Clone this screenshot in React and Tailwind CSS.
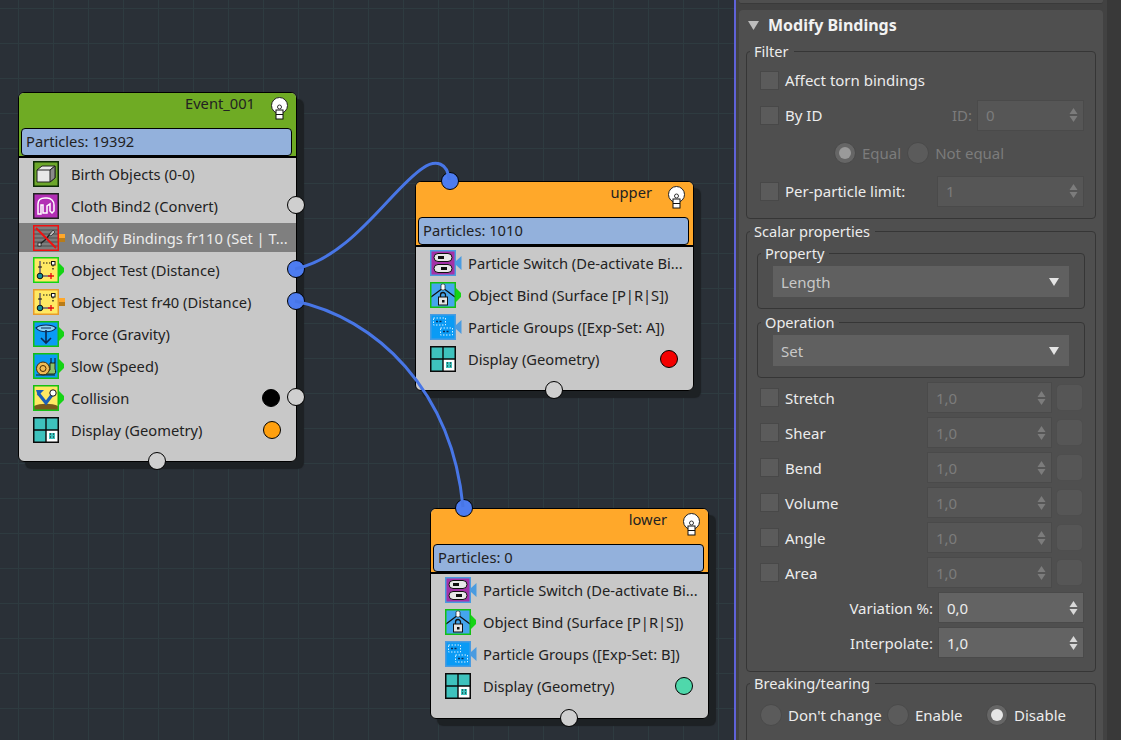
import React from "react";

function Frame({ border = "#000", children }) {
  return (
    <svg width="26" height="26" viewBox="0 0 26 26" className="shrink-0">
      {children}
      <rect x="0.75" y="0.75" width="24.5" height="24.5" fill="none" stroke={border} strokeWidth="1.5" />
    </svg>
  );
}

const BirthIcon = () => (
  <Frame border="#0c2a06">
    <rect width="26" height="26" fill="#6ca72a" />
    <path d="M4 9l5-4h13v12l-5 4H4z" fill="#e8e8e8" stroke="#222" />
    <path d="M4 9h13l5-4" fill="none" stroke="#222" />
    <path d="M17 9l5-4v12l-5 4z" fill="#8a8a8a" stroke="#222" />
  </Frame>
);

const ClothIcon = () => (
  <Frame border="#222">
    <rect width="26" height="26" fill="#b22fb4" />
    <path d="M5 21V11c0-4 3-6 7-6h2c4 0 7 3 7 7v6l-2 2-2-2v-7l-3 2v7h-4v-8H8v9z" fill="none" stroke="#fff" strokeWidth="1.5" />
  </Frame>
);

const ModifyIcon = () => (
  <Frame border="#f01010">
    <rect width="26" height="26" fill="#7d7d7d" />
    <path d="M1 5h24M1 9h24M1 13h24M1 17h24M1 21h24" stroke="#4e4e4e" strokeWidth="1.2" />
    <path d="M7 19l5-4 6-7" stroke="#222" strokeWidth="1.5" fill="none" />
    <rect x="5" y="18" width="3" height="3" fill="#ddd" stroke="#111" strokeWidth="0.7" />
    <path d="M16 10l4-5 2 2-4 4z" fill="#bbb" stroke="#222" strokeWidth="0.7" />
    <path d="M3 3l20 20" stroke="#f01010" strokeWidth="2" />
  </Frame>
);

const TestIcon = ({ border }) => (
  <Frame border={border}>
    <rect width="26" height="26" fill="#ffe963" />
    <path d="M7 4v15M6 19h13" stroke="#16187a" strokeWidth="1" fill="none" />
    <path d="M10 6h9" stroke="#111" strokeWidth="1.2" strokeDasharray="1.5 1.5" />
    <path d="M20 8v5" stroke="#111" strokeWidth="1.2" strokeDasharray="1.5 1.5" />
    <rect x="18.5" y="4.5" width="3.5" height="3.5" fill="#fff" stroke="#111" />
    <path d="M15 19h6M18 16v6" stroke="#e81414" strokeWidth="1.4" />
    <circle cx="7" cy="19" r="2.8" fill="#118f9b" stroke="#111" />
    <path d="M5 10h4" stroke="#111" />
  </Frame>
);

const ForceIcon = () => (
  <Frame border="#14c014">
    <rect width="26" height="26" fill="#0a9bf5" />
    <path d="M3 7c4-4 16-4 20 0-4 5-16 5-20 0z" fill="#8fd3f5" stroke="#0b2a55" strokeWidth="1.2" />
    <path d="M13 9v13M8 17l5 5 5-5" fill="none" stroke="#0b2a55" strokeWidth="1.6" />
    <path d="M8 7h10" stroke="#0b2a55" />
  </Frame>
);

const SlowIcon = () => (
  <Frame border="#14c014">
    <rect width="26" height="26" fill="#0a9bf5" />
    <path d="M13 21h8c2 0 2-3 1-5v-6h-5v7l-4 1z" fill="#8dc26a" stroke="#1c2b12" />
    <path d="M18 10V5M22 10V5" stroke="#111" strokeWidth="1" />
    <circle cx="10" cy="15.5" r="6.5" fill="#f0bb55" stroke="#4a2c05" />
    <circle cx="10" cy="15.5" r="3" fill="none" stroke="#4a2c05" />
    <path d="M3 22h19" stroke="#1c2b12" />
  </Frame>
);

const CollisionIcon = () => (
  <Frame border="#14c014">
    <rect width="26" height="26" fill="#ffe963" />
    <path d="M1 25v-4c6-3 18-3 24 0v4z" fill="#7a5a1c" />
    <path d="M5 8l8 10 6-8" fill="none" stroke="#1c5fb8" strokeWidth="3.2" />
    <path d="M3 5h8l-6 6z" fill="#1c5fb8" />
    <circle cx="20" cy="8" r="3.2" fill="#fff" stroke="#111" />
  </Frame>
);

const DisplayIcon = () => (
  <Frame border="#0a0a0a">
    <rect width="26" height="26" fill="#3ec2bd" />
    <rect x="13" y="13" width="12" height="12" fill="#fff" />
    <rect x="16" y="16" width="6" height="6" fill="#3ec2bd" />
    <path d="M17 17h1M20 17h1M17 20h1M20 20h1" stroke="#0a0a0a" />
    <path d="M13 0v26M0 13h26" stroke="#0a0a0a" strokeWidth="1.4" />
  </Frame>
);

const SwitchIcon = () => (
  <Frame border="#4a9be0">
    <rect width="26" height="26" fill="#a431a8" />
    <rect x="4" y="3.5" width="18" height="8" rx="4" fill="#e8e8e8" stroke="#111" />
    <rect x="4" y="14.5" width="18" height="8" rx="4" fill="#e8e8e8" stroke="#111" />
    <path d="M8 7.5h6M17 18.5h-6" stroke="#111" strokeWidth="3" />
  </Frame>
);

const BindIcon = () => (
  <Frame border="#14c014">
    <rect width="26" height="26" fill="#44a6ee" />
    <path d="M1 15L13 6l12 9" fill="none" stroke="#111" strokeWidth="1.2" />
    <rect x="11" y="2" width="4" height="6" rx="1.5" fill="#fff" stroke="#111" strokeWidth="0.7" />
    <rect x="8.5" y="15" width="9" height="8" fill="#e4e4e4" stroke="#111" />
    <path d="M10.5 15v-2a2.5 2.5 0 015 0v2" fill="none" stroke="#111" strokeWidth="1.3" />
    <rect x="12" y="18" width="2.5" height="2.5" fill="#111" />
  </Frame>
);

const GroupsIcon = () => (
  <Frame border="#4a9be0">
    <rect width="26" height="26" fill="#0a9bf5" />
    <rect x="3.5" y="4" width="12" height="7" fill="none" stroke="#d4eeff" strokeDasharray="1.5 1.5" />
    <rect x="10.5" y="14" width="12" height="7" fill="none" stroke="#d4eeff" strokeDasharray="1.5 1.5" />
    <path d="M6 7.5h7M13 17.5h7" stroke="#0b2a55" strokeDasharray="2 1.5" strokeWidth="1.4" />
  </Frame>
);

function Connector({ kind }) {
  if (kind === "out")
    return (
      <svg width="6" height="14" viewBox="0 0 6 14" className="shrink-0">
        <path d="M0 0l5 5v4l-5 5z" fill="#14d414" />
      </svg>
    );
  if (kind === "in")
    return (
      <svg width="6" height="14" viewBox="0 0 6 14" className="shrink-0">
        <path d="M5.5 0v14L0 9V5z" fill="#4a9be0" />
      </svg>
    );
  if (kind === "flag")
    return (
      <svg width="6" height="14" viewBox="0 0 6 14" className="shrink-0">
        <rect y="3" width="6" height="4" fill="#ffa82a" />
        <rect y="7" width="6" height="4" fill="#b87c1a" />
      </svg>
    );
  return <span className="w-[6px] shrink-0" />;
}

function Bulb() {
  return (
    <svg width="19" height="23" viewBox="0 0 19 23" className="shrink-0">
      <circle cx="9.5" cy="8.5" r="8" fill="#fff" stroke="#222" />
      <rect x="6" y="13" width="7" height="9" fill="#fff" stroke="#111" />
      <path d="M6 17.5h7" stroke="#111" />
      <circle cx="9.5" cy="10" r="2" fill="none" stroke="#333" />
    </svg>
  );
}

function Row({ icon, link, label, active, dot }) {
  return (
    <div className={`flex items-center pl-[14px] pr-2 ${active ? "mt-[1px] mb-[2px] h-[29px] bg-[#7f7f7f] text-[#ececec]" : "h-8 text-[#222222]"}`}>
      {icon}
      <Connector kind={link} />
      <span className="ml-[6px] flex-1 whitespace-nowrap pt-[1px]">{label}</span>
      {dot}
    </div>
  );
}

function Dot({ className }) {
  return <span className={`h-[18px] w-[18px] rounded-full border border-black ${className}`} />;
}

function Port({ className }) {
  return <span className={`absolute h-[18px] w-[18px] rounded-full border border-black ${className}`} />;
}

function Node({ className, head, title, count, rows, children }) {
  return (
    <div className={`absolute w-[279px] overflow-visible rounded-[6px] border border-black bg-[#c8c8c8] text-[14.7px] shadow-[7px_7px_1px_#1d2124] ${className}`}>
      <div className={`rounded-t-[5px] border-b-2 border-black px-[2px] ${head}`}>
        <div className="flex h-[35px] items-start justify-end pr-[5px] text-[#222222]">
          <span className="mr-[15px] leading-[21px]">{title}</span>
          <span className="mt-[4px]"><Bulb /></span>
        </div>
        <div className="mr-[2px] flex h-[28px] items-center rounded-[4px] border border-black bg-[#93b1dc] px-[4px] pb-[1px] text-[#222222]">
          Particles: {count}
        </div>
      </div>
      {rows}
      {children}
    </div>
  );
}

function Wires() {
  return (
    <svg width="733" height="740" className="pointer-events-none absolute left-0 top-0" fill="none" stroke="#4876e6" strokeWidth="3">
      <path d="M295 269C352 257 392 188 423 168C436 159 448 163 449 180" />
      <path d="M295 301C376 318 452 390 463 507" />
    </svg>
  );
}

function CheckBox() {
  return <span className="h-[19px] w-[19px] shrink-0 border border-[#484848] bg-[#5b5b5b]" />;
}

function Arrows({ dim }) {
  const fill = dim ? "#7c7c7c" : "#d8d8d8";
  return (
    <svg width="9" height="16" viewBox="0 0 9 16" className="shrink-0">
      <path d="M4.5 1L8.5 7H.5z" fill={fill} />
      <path d="M4.5 15L8.5 9H.5z" fill={fill} />
    </svg>
  );
}

function Spinner({ value, width, dim = true }) {
  return (
    <div className={`flex h-[31px] shrink-0 items-center justify-between border border-[#4a4a4a] pl-[8px] pr-[5px] ${width} ${dim ? "bg-[#565656] text-[#7c7c7c]" : "bg-[#636363] text-[#ececec]"}`}>
      <span className="pt-[1px]">{value}</span>
      <Arrows dim={dim} />
    </div>
  );
}

function Group({ label, className, children }) {
  return (
    <fieldset className={`rounded-[4px] border border-[#363636] ${className}`}>
      <legend className="ml-[3px] pl-[4px] pr-[5px] text-[14.6px] leading-[20px] text-[#ececec]">{label}</legend>
      {children}
    </fieldset>
  );
}

function Select({ value }) {
  return (
    <div className="mx-[15px] mt-[3px] flex h-[31px] items-center justify-between bg-[#606060] pl-[8px] pr-[10px] text-[#c8c8c8]">
      <span className="pt-[1px]">{value}</span>
      <svg width="10" height="8" viewBox="0 0 10 8"><path d="M0 0h10L5 8z" fill="#e4e4e4" /></svg>
    </div>
  );
}

function ScalarRow({ label }) {
  return (
    <div className="flex h-[35px] items-center pl-[13px] pr-[12px]">
      <CheckBox />
      <span className="ml-[6px] flex-1 pt-[2px] text-[#ececec]">{label}</span>
      <Spinner value="1,0" width="w-[125px]" />
      <span className="ml-[4px] h-[27px] w-[27px] rounded-[5px] border border-[#4e4e4e] bg-[#565656]" />
    </div>
  );
}

function Radio({ checked, dim, label, className }) {
  return (
    <div className={`flex items-center ${className}`}>
      <span className={`flex h-[22px] w-[22px] items-center justify-center rounded-full border border-[#4a4a4a] ${checked ? "bg-[#666666]" : "bg-[#5b5b5b]"}`}>
        {checked && <span className={`h-[12px] w-[12px] rounded-full ${dim ? "bg-[#9a9a9a]" : "bg-[#e6e6e6]"}`} />}
      </span>
      <span className={`ml-[6px] pt-[1px] ${dim ? "text-[#7c7c7c]" : "text-[#ececec]"}`}>{label}</span>
    </div>
  );
}

export default function App() {
  return (
    <div className="flex h-[740px] w-[1121px] overflow-hidden font-['Noto_Sans',sans-serif]">
      {/* Flow graph */}
      <div className="relative w-[734px] shrink-0 bg-[#2a3037] bg-[linear-gradient(#2e3b40_1px,transparent_1px),linear-gradient(90deg,#2e3b40_1px,transparent_1px)] bg-[size:35px_35px] bg-[position:18px_8px]">
        <Node
          className="left-[18px] top-[92px] h-[370px]"
          head="bg-[#6fab24]"
          title="Event_001"
          count="19392"
          rows={
            <div>
              <Row icon={<BirthIcon />} label="Birth Objects (0-0)" />
              <Row icon={<ClothIcon />} label="Cloth Bind2 (Convert)" />
              <Row icon={<ModifyIcon />} link="flag" label="Modify Bindings fr110 (Set | T..." active />
              <Row icon={<TestIcon border="#14d414" />} link="out" label="Object Test (Distance)" />
              <Row icon={<TestIcon border="#e89a2a" />} link="flag" label="Object Test fr40 (Distance)" />
              <Row icon={<ForceIcon />} link="out" label="Force (Gravity)" />
              <Row icon={<SlowIcon />} link="out" label="Slow (Speed)" />
              <Row icon={<CollisionIcon />} link="out" label="Collision" dot={<Dot className="mr-[8px] bg-black" />} />
              <Row icon={<DisplayIcon />} label="Display (Geometry)" dot={<Dot className="mr-[7px] bg-[#ffa00f]" />} />
            </div>
          }
        >
          <Port className="left-[268px] top-[103px] bg-[#cfcfcf]" />
          <Port className="left-[268px] top-[167px] bg-[#4d7cf0]" />
          <Port className="left-[268px] top-[199px] bg-[#4d7cf0]" />
          <Port className="left-[268px] top-[295px] bg-[#cfcfcf]" />
          <Port className="left-[129px] top-[359px] bg-[#cfcfcf]" />
        </Node>

        <Node
          className="left-[415px] top-[181px] h-[210px]"
          head="bg-[#ffa82a]"
          title="upper"
          count="1010"
          rows={
            <div>
              <Row icon={<SwitchIcon />} link="in" label="Particle Switch (De-activate Bi..." />
              <Row icon={<BindIcon />} link="out" label="Object Bind (Surface [P|R|S])" />
              <Row icon={<GroupsIcon />} link="in" label="Particle Groups ([Exp-Set: A])" />
              <Row icon={<DisplayIcon />} label="Display (Geometry)" dot={<Dot className="mr-[7px] bg-[#f40000]" />} />
            </div>
          }
        >
          <Port className="left-[25px] top-[-10px] bg-[#4d7cf0]" />
          <Port className="left-[129px] top-[199px] bg-[#cfcfcf]" />
        </Node>

        <Node
          className="left-[430px] top-[508px] h-[211px]"
          head="bg-[#ffa82a]"
          title="lower"
          count="0"
          rows={
            <div>
              <Row icon={<SwitchIcon />} link="in" label="Particle Switch (De-activate Bi..." />
              <Row icon={<BindIcon />} link="out" label="Object Bind (Surface [P|R|S])" />
              <Row icon={<GroupsIcon />} link="in" label="Particle Groups ([Exp-Set: B])" />
              <Row icon={<DisplayIcon />} label="Display (Geometry)" dot={<Dot className="mr-[7px] bg-[#4fd8ab]" />} />
            </div>
          }
        >
          <Port className="left-[24px] top-[-10px] bg-[#4d7cf0]" />
          <Port className="left-[129px] top-[200px] bg-[#cfcfcf]" />
        </Node>

        <Wires />
      </div>

      <div className="w-[2px] shrink-0 bg-[#5f62d8]" />

      {/* Parameters panel */}
      <div className="flex min-w-0 flex-1 bg-[#424242] text-[15px]">
        <div className="w-[367px] shrink-0 pl-[3px]">
          <div className="h-[4px] rounded-b-[3px] border-b border-[#3a3a3a] bg-[#4f4f4f]" />
          <div className="mt-[6px] rounded-t-[4px] bg-[#4f4f4f] px-[7px]">
            <div className="flex h-[31px] items-center">
              <svg width="11" height="9" viewBox="0 0 11 9" className="ml-[2px]"><path d="M0 0h11L5.5 9z" fill="#bdbdbd" /></svg>
              <span className="ml-[9px] flex-1 pb-[2px] text-[16px] font-bold text-[#f2f2f2]">Modify Bindings</span>
              <span className="mr-[3px] h-[10px] w-[10px] bg-[radial-gradient(#9a9a9a_35%,transparent_40%)] bg-[size:2px_2px]" />
            </div>

            <Group label="Filter" className="h-[178px]">
              <div className="flex h-[38px] items-center pl-[13px]">
                <CheckBox />
                <span className="ml-[6px] pt-[1px] text-[#ececec]">Affect torn bindings</span>
              </div>
              <div className="flex h-[32px] items-center pl-[13px] pr-[11px]">
                <CheckBox />
                <span className="ml-[6px] flex-1 pt-[1px] text-[#ececec]">By ID</span>
                <span className="mr-[5px] pt-[1px] text-[#7c7c7c]">ID:</span>
                <Spinner value="0" width="w-[107px]" />
              </div>
              <div className="flex h-[44px] items-center pl-[87px]">
                <Radio checked dim label="Equal" />
                <Radio dim label="Not equal" className="ml-[6px]" />
              </div>
              <div className="flex h-[32px] items-center pl-[13px] pr-[11px]">
                <CheckBox />
                <span className="ml-[6px] flex-1 pt-[1px] text-[#ececec]">Per-particle limit:</span>
                <Spinner value="1" width="w-[147px]" />
              </div>
            </Group>

            <Group label="Scalar properties" className="mt-[2px] h-[451px]">
              <Group label="Property" className="mx-[10px] mt-[2px] h-[66px]">
                <Select value="Length" />
              </Group>
              <Group label="Operation" className="mx-[10px] mt-[3px] h-[66px]">
                <Select value="Set" />
              </Group>
              <div className="mt-[2px]">
                {["Stretch", "Shear", "Bend", "Volume", "Angle", "Area"].map((label) => (
                  <ScalarRow key={label} label={label} />
                ))}
              </div>
              <div className="flex h-[35px] items-center justify-end pr-[11px]">
                <span className="mr-[5px] pt-[2px] text-[#ececec]">Variation %:</span>
                <Spinner value="0,0" width="w-[146px]" dim={false} />
              </div>
              <div className="flex h-[35px] items-center justify-end pr-[11px]">
                <span className="mr-[5px] pt-[2px] text-[#ececec]">Interpolate:</span>
                <Spinner value="1,0" width="w-[146px]" dim={false} />
              </div>
            </Group>

            <Group label="Breaking/tearing" className="mt-[1px] h-[80px]">
              <div className="flex h-[44px] items-center pl-[13px]">
                <Radio label="Don't change" className="w-[127px]" />
                <Radio label="Enable" className="w-[99px]" />
                <Radio checked label="Disable" />
              </div>
            </Group>
          </div>
        </div>
        <div className="ml-[4px] flex-1 bg-[#393939]" />
      </div>
    </div>
  );
}
